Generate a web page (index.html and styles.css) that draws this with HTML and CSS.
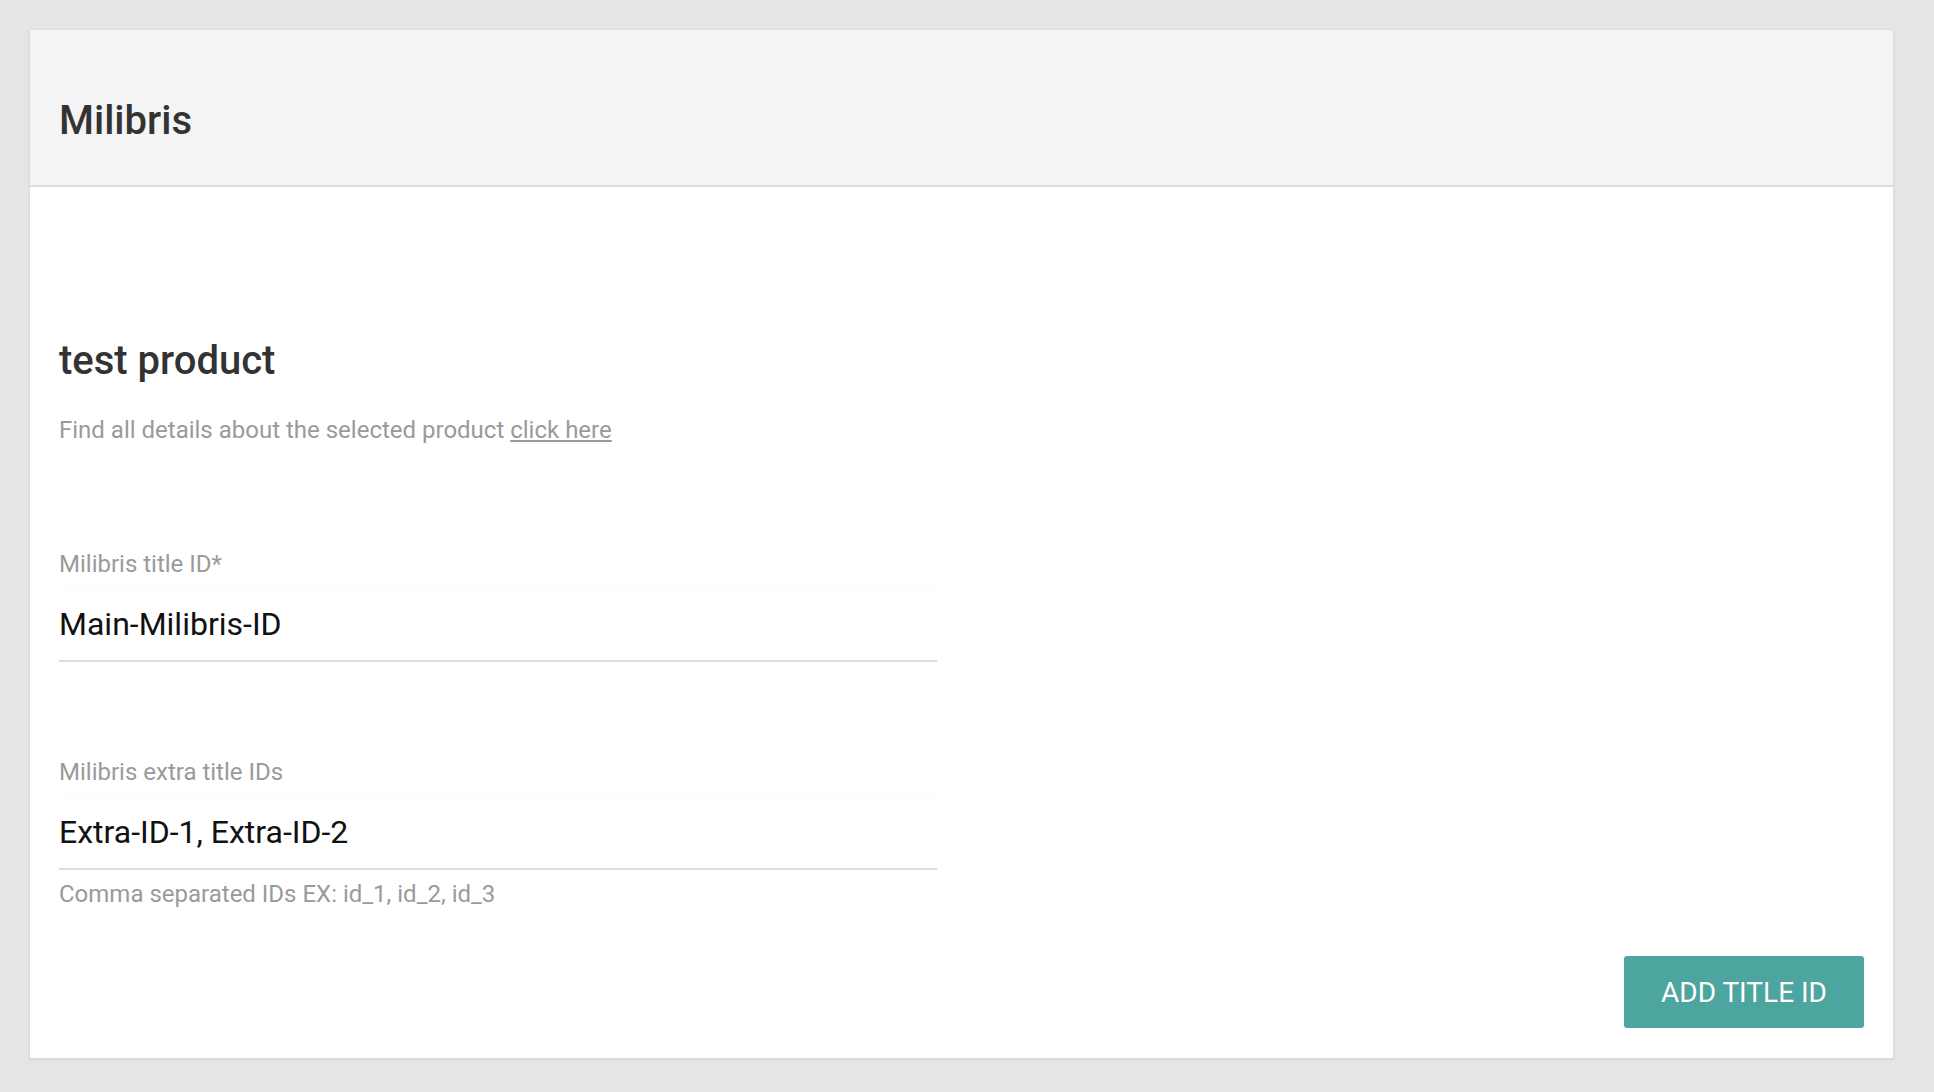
FILE: index.html
```html
<!DOCTYPE html>
<html lang="en">
<head>
<meta charset="utf-8">
<title>Milibris</title>
<link rel="stylesheet" href="styles.css">
</head>
<body>
<div class="card">
  <div class="card-header">
    <h1 class="card-title">Milibris</h1>
  </div>
  <div class="card-body">
    <h2 class="product-title">test product</h2>
    <p class="product-desc">Find all details about the selected product <a class="link" href="#">click here</a></p>

    <div class="field field-first">
      <label class="field-label">Milibris title ID*</label>
      <div class="field-input">Main-Milibris-ID</div>
    </div>

    <div class="field field-second">
      <label class="field-label">Milibris extra title IDs</label>
      <div class="field-input">Extra-ID-1, Extra-ID-2</div>
      <div class="field-help">Comma separated IDs EX: id_1, id_2, id_3</div>
    </div>

    <div class="actions">
      <button class="btn">ADD TITLE ID</button>
    </div>
  </div>
</div>
</body>
</html>
```
FILE: styles.css
```css
html, body {
  margin: 0;
  padding: 0;
}
body {
  background: #e4e6e5;
  font-family: Roboto, "Liberation Sans", Arial, sans-serif;
  padding: 29px 40px 33px 29px;
}
.card {
  background: #ffffff;
  border: 1px solid #dcdcdc;
  border-radius: 2px;
  box-shadow: 0 1px 2px rgba(0, 0, 0, 0.08);
}
.card-header {
  background: #f4f4f4;
  height: 157px;
  box-sizing: border-box;
  padding: 71px 29px 0;
  border-bottom: 2px solid #dcdcdc;
}
.card-title {
  margin: 0;
  font-size: 40px;
  line-height: 40px;
  font-weight: 500;
  color: #333333;
}
.card-body {
  padding: 154px 29px 30px;
}
.product-title {
  margin: 0;
  font-size: 40px;
  line-height: 40px;
  font-weight: 500;
  color: #333333;
}
.product-desc {
  margin: 37px 0 0;
  font-size: 24px;
  line-height: 24px;
  color: #9a9a9a;
}
.link {
  color: #9a9a9a;
  text-decoration: underline;
}
.field {
  width: 878px;
}
.field-first {
  margin-top: 110px;
}
.field-second {
  margin-top: 98px;
}
.field-label {
  display: block;
  font-size: 24px;
  line-height: 24px;
  color: #9a9a9a;
  margin-bottom: 12px;
}
.field-input {
  height: 72px;
  line-height: 72px;
  font-size: 32px;
  color: #111111;
  border-top: 1px solid #fafafa;
  border-bottom: 2px solid #dedede;
  box-sizing: content-box;
  margin-top: -1px;
}
.field-help {
  margin-top: 12px;
  font-size: 24px;
  line-height: 24px;
  color: #9a9a9a;
}
.actions {
  display: flex;
  justify-content: flex-end;
  margin-top: 50px;
}
.btn {
  width: 240px;
  height: 72px;
  background: #4ca59e;
  color: #ffffff;
  border: none;
  border-radius: 3px;
  font-family: Roboto, "Liberation Sans", Arial, sans-serif;
  font-size: 28px;
  font-weight: 400;
  padding: 0;
  cursor: pointer;
}
```
